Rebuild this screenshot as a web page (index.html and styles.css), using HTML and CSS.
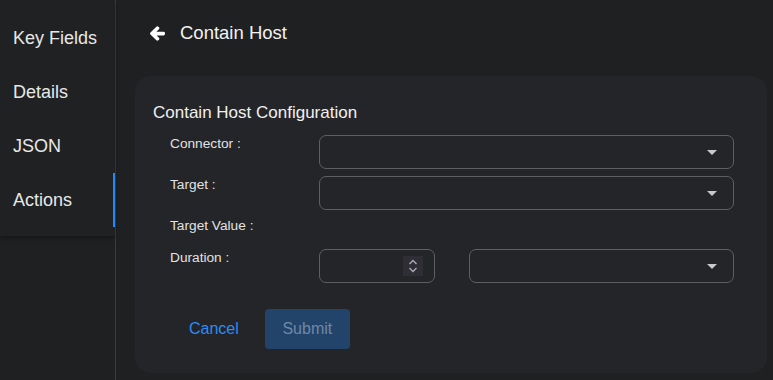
FILE: index.html
```html
<!DOCTYPE html>
<html lang="en">
<head>
<meta charset="utf-8">
<title>Contain Host</title>
<link rel="stylesheet" href="styles.css">
</head>
<body>
<aside class="sidebar">
  <nav class="tabs">
    <div class="tab">Key Fields</div>
    <div class="tab">Details</div>
    <div class="tab">JSON</div>
    <div class="tab active">Actions</div>
  </nav>
</aside>
<main class="main">
  <header class="header">
    <svg class="back" viewBox="-24 -24 496 560" width="15" height="17"><path fill="#ffffff" stroke="#ffffff" stroke-width="44" stroke-linejoin="round" d="M257.5 445.1l-22.2 22.2c-9.4 9.4-24.6 9.4-33.9 0L7 273c-9.4-9.4-9.4-24.6 0-33.9L201.4 44.7c9.4-9.4 24.6-9.4 33.9 0l22.2 22.2c9.5 9.5 9.3 25-.4 34.3L136.6 216H424c13.3 0 24 10.7 24 24v32c0 13.3-10.7 24-24 24H136.6l120.5 114.8c9.8 9.3 10 24.8.4 34.3z"/></svg>
    <h1 class="title">Contain Host</h1>
  </header>
  <section class="card">
    <h2 class="card-title">Contain Host Configuration</h2>
    <div class="form">
      <div class="label">Connector :</div>
      <div class="field select"><svg class="caret" viewBox="0 0 24 24" width="24" height="24"><path d="M7 10l5 5 5-5z"/></svg></div>

      <div class="label">Target :</div>
      <div class="field select"><svg class="caret" viewBox="0 0 24 24" width="24" height="24"><path d="M7 10l5 5 5-5z"/></svg></div>

      <div class="label">Target Value :</div>
      <div class="empty"></div>

      <div class="label">Duration :</div>
      <div class="duration">
        <div class="field number">
          <svg class="spin" viewBox="0 0 20 20" width="20" height="20"><rect width="20" height="20" fill="#2f2e36"/><polyline points="6.5,8 10,4.5 13.5,8" fill="none" stroke="#aaa9b2" stroke-width="1.4"/><polyline points="6.5,12 10,15.5 13.5,12" fill="none" stroke="#aaa9b2" stroke-width="1.4"/></svg>
        </div>
        <div class="field select unit"><svg class="caret" viewBox="0 0 24 24" width="24" height="24"><path d="M7 10l5 5 5-5z"/></svg></div>
      </div>
    </div>
    <div class="actions">
      <button class="btn cancel" type="button">Cancel</button>
      <button class="btn submit" type="button">Submit</button>
    </div>
  </section>
</main>
</body>
</html>
```

FILE: styles.css
```css
* { box-sizing: border-box; }

html, body {
  margin: 0;
  height: 380px;
  overflow: hidden;
}

body {
  display: flex;
  background: #1f2022;
  font-family: "Liberation Sans", Arial, sans-serif;
  color: #e6e6e6;
}

.sidebar {
  width: 116px;
  flex: none;
  border-right: 1px solid #3b3c3f;
}

.tabs {
  padding: 11px 0 9px;
  background: #202123;
  box-shadow: 0 2px 4px rgba(0, 0, 0, 0.35);
}

.tab {
  height: 54px;
  padding: 1px 0 0 13px;
  font-size: 18px;
  line-height: 53px;
  color: #e8e8e8;
}

.tab.active {
  box-shadow: inset -2px 0 0 #1e88ff;
}

.main {
  flex: 1;
  display: flex;
  flex-direction: column;
  padding: 0 6px 7px 19px;
}

.header {
  height: 76px;
  padding: 21px 0 0 15px;
  display: flex;
  align-items: flex-start;
}

.back {
  margin-top: 4px;
  margin-right: 15px;
}

.title {
  margin: 0;
  font-size: 18.5px;
  font-weight: normal;
  line-height: 24px;
  color: #f2f2f2;
}

.card {
  flex: 1;
  background: #242528;
  border-radius: 16px;
  padding: 27px 18px 24px;
}

.card-title {
  margin: 0 0 12px;
  font-size: 17px;
  font-weight: normal;
  line-height: 20px;
  color: #f0f0f0;
}

.form {
  display: grid;
  grid-template-columns: 149px 415px;
  row-gap: 7px;
  padding-left: 17px;
}

.label {
  font-size: 13.7px;
  line-height: 16px;
  padding-top: 1px;
  color: #e2e2e2;
}

.field {
  height: 34px;
  border: 1px solid #5e5f62;
  border-radius: 7px;
  display: flex;
  align-items: center;
  justify-content: flex-end;
}

.select {
  padding-right: 9px;
}

.caret path {
  fill: #c9c9c9;
}

.empty {
  height: 25px;
}

.duration {
  display: flex;
  gap: 34px;
}

.number {
  width: 116px;
  padding-right: 11px;
}

.unit {
  flex: 1;
}

.actions {
  display: flex;
  gap: 8px;
  margin-top: 26px;
  padding-left: 17px;
}

.btn {
  height: 40px;
  border: 0;
  border-radius: 4px;
  font-family: "Liberation Sans", Arial, sans-serif;
  font-size: 16px;
  line-height: 40px;
  padding: 0;
  background: transparent;
}

.cancel {
  padding: 0 19px 0 19px;
  margin-right: -1px;
  color: #2d8cf6;
}

.submit {
  width: 85px;
  background: #22446a;
  color: #6f88a5;
}
```
